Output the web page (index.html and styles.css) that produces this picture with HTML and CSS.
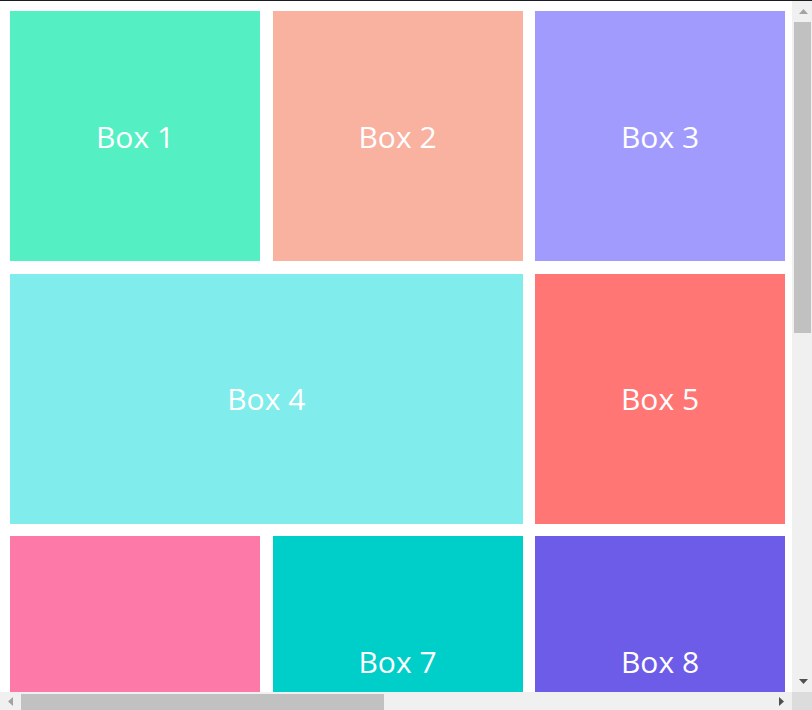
FILE: index.html
```html
<!DOCTYPE html>
<html lang="en">
<head>
    <meta charset="UTF-8">
    <meta name="viewport" content="width=device-width, initial-scale=1.0">
    <title>Grid Layout</title>
    <link rel="stylesheet" href="styles.css">
</head>
<body>
    <div class="frame">
        <div class="viewport">
            <div class="grid">
                <div class="box box1">Box 1</div>
                <div class="box box2">Box 2</div>
                <div class="box box3">Box 3</div>
                <div class="box box4">Box 4</div>
                <div class="box box5">Box 5</div>
                <div class="box box6">Box 6</div>
                <div class="box box7">Box 7</div>
                <div class="box box8">Box 8</div>
                <div class="box box9">Box 9</div>
                <div class="box box10">Box 10</div>
            </div>
        </div>

        <!-- scrollbars drawn by hand, the browser hides its own -->
        <div class="vscroll">
            <div class="arrow-btn">
                <svg width="9" height="5" viewBox="0 0 9 5"><polygon points="0,5 4.5,0 9,5" fill="#a3a3a3"/></svg>
            </div>
            <div class="track">
                <div class="thumb vthumb"></div>
            </div>
            <div class="arrow-btn">
                <svg width="9" height="5" viewBox="0 0 9 5"><polygon points="0,0 9,0 4.5,5" fill="#505050"/></svg>
            </div>
        </div>
        <div class="hscroll">
            <div class="arrow-btn">
                <svg width="5" height="9" viewBox="0 0 5 9"><polygon points="5,0 5,9 0,4.5" fill="#a3a3a3"/></svg>
            </div>
            <div class="track">
                <div class="thumb hthumb"></div>
            </div>
            <div class="arrow-btn">
                <svg width="5" height="9" viewBox="0 0 5 9"><polygon points="0,0 5,4.5 0,9" fill="#505050"/></svg>
            </div>
        </div>
        <div class="corner"></div>
    </div>
</body>
</html>
```

FILE: styles.css
```css
html, body {
    margin: 0;
    height: 100%;
    overflow: hidden;
}
body {
    font-family: "Open Sans", "Noto Sans", sans-serif;
    border-top: 1px solid #1c1c24;
    box-sizing: border-box;
}
.frame {
    display: grid;
    grid-template-columns: 1fr 20px;
    grid-template-rows: 1fr 18px;
    height: 100%;
    background-color: #fff;
}
.viewport {
    overflow: hidden;
}
.grid {
    display: grid;
    grid-template-columns: repeat(3, 250px);
    grid-auto-rows: 250px;
    gap: 12.5px;
    padding: 10px;
    width: 1630px;
    height: 1430px;
    box-sizing: border-box;
}
.box {
    display: flex;
    align-items: center;
    justify-content: center;
    color: white;
    font-size: 30px;
}
.box1 { background-color: #55efc4; }
.box2 { background-color: #f9b1a0; }
.box3 { background-color: #a29bfe; }
.box4 {
    background-color: #81ecec;
    grid-column: span 2;
}
.box5 { background-color: #ff7675; }
.box6 {
    background-color: #fd79a8;
    grid-row: span 2;
}
.box7 { background-color: #00cec9; }
.box8 { background-color: #6c5ce7; }
.box9 { background-color: #74b9ff; }
.box10 { background-color: #ffeaa7; }

.vscroll, .hscroll {
    display: flex;
    background-color: #f0f0f0;
}
.vscroll {
    flex-direction: column;
    grid-row: 1 / span 2;
    grid-column: 2;
    height: 691px;
}
.vscroll .arrow-btn {
    height: 21px;
    padding-left: 2px;
}
.hscroll .arrow-btn {
    width: 21px;
}
.arrow-btn {
    display: flex;
    align-items: center;
    justify-content: center;
    flex-shrink: 0;
}
.track {
    flex: 1;
}
.thumb {
    background-color: #c1c1c1;
}
.vthumb {
    width: 17px;
    height: 311px;
    margin-left: 2px;
}
.hthumb {
    width: 363px;
    height: 16px;
    margin-top: 2px;
}
.corner {
    grid-row: 2;
    grid-column: 2;
    background-color: #dcdcdc;
}
```
